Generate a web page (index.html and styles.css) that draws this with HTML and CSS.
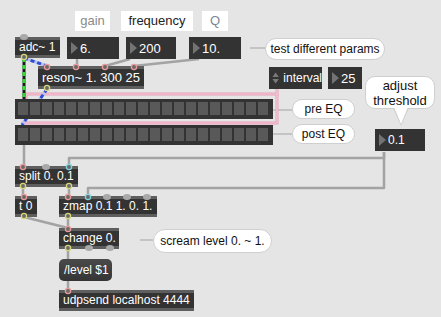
FILE: index.html
```html
<!DOCTYPE html>
<html lang="en">
<head>
    <meta charset="UTF-8">
    <title>scream level</title>
    <link rel="stylesheet" href="styles.css">
</head>
<body>
    <div class="patcher">
        <!-- patch cords, drawn under the boxes -->
        <svg class="layer" width="441" height="317">
            <g class="cord">
                <path d="M77,59 V66"/>
                <path d="M130,59 L105,66"/>
                <path d="M199,59 L134,66"/>
                <path d="M24,145 V166"/>
                <path d="M384,152 V158 H69 V166"/>
                <path d="M384,152 V188 H88 V196"/>
                <path d="M23,187 V196"/>
                <path d="M69,187 V196"/>
                <path d="M24,217 L68,228"/>
                <path d="M68,217 V228"/>
                <path d="M68,249 V259"/>
                <path d="M68,281 V290"/>
            </g>
            <g class="tail">
                <path d="M250,48 H266"/>
                <path d="M273,110 H293"/>
                <path d="M273,134 H293"/>
                <path d="M140,240 H154"/>
            </g>
            <g class="pink">
                <path d="M277,89 V94 H26 V99"/>
                <path d="M277,94 V123 H23 V125"/>
            </g>
            <g class="pink-in">
                <path d="M277,89 V94 H26 V99"/>
                <path d="M277,94 V123 H23 V125"/>
            </g>
            <g class="sig">
                <path d="M24,58 L47,66"/>
                <path d="M47,89 L22,125"/>
            </g>
            <g class="sig-dash">
                <path d="M24,58 L47,66"/>
                <path d="M47,89 L22,125"/>
            </g>
            <path class="green" d="M24,58 V99"/>
            <path class="green-dash" d="M24,58 V99"/>
        </svg>

        <div class="box label gain">gain</div>
        <div class="box label freq">frequency</div>
        <div class="box label q">Q</div>

        <div class="box obj adc">adc~ 1</div>
        <div class="box num n6">6.</div>
        <div class="box num n200">200</div>
        <div class="box num n10">10.</div>
        <div class="box bubble tip-test">test different params</div>

        <div class="box obj reson">reson~ 1. 300 25</div>
        <div class="box menu interval">
            <svg width="8" height="14" viewBox="0 0 8 14"><path d="M4,1 L7.5,6 H0.5 Z M4,13 L7.5,8 H0.5 Z" fill="#7a7a7a"/></svg>
            interval
        </div>
        <div class="box num n25">25</div>
        <div class="box bubble tip-adjust">adjust<br>threshold</div>

        <div class="box meter m1"><i></i></div>
        <div class="box meter m2"><i></i></div>
        <div class="box bubble tip-pre">pre EQ</div>
        <div class="box bubble tip-post">post EQ</div>
        <div class="box num n01">0.1</div>

        <div class="box obj split">split 0. 0.1</div>
        <div class="box obj t0">t 0</div>
        <div class="box obj zmap">zmap 0.1 1. 0. 1.</div>
        <div class="box obj change">change 0.</div>
        <div class="box bubble tip-scream">scream level 0. ~ 1.</div>
        <div class="box msg level">/level $1</div>
        <div class="box obj udp">udpsend localhost 4444</div>

        <!-- inlets and outlets, drawn over the boxes -->
        <svg class="layer" width="441" height="317">
            <g class="bump">
                <ellipse cx="24" cy="37" rx="4" ry="3"/>
                <ellipse cx="46" cy="167" rx="4" ry="3"/>
                <ellipse cx="107" cy="197" rx="4" ry="3"/>
                <ellipse cx="127" cy="197" rx="4" ry="3"/>
                <ellipse cx="147" cy="197" rx="4" ry="3"/>
                <ellipse cx="89" cy="248" rx="4" ry="3"/>
                <ellipse cx="110" cy="248" rx="4" ry="3"/>
            </g>
            <g class="port inlet">
                <circle cx="47" cy="67" r="2.6"/>
                <circle cx="76" cy="67" r="2.6"/>
                <circle cx="105" cy="67" r="2.6"/>
                <circle cx="134" cy="67" r="2.6"/>
                <circle cx="23" cy="167" r="2.6"/>
                <circle cx="24" cy="197" r="2.6"/>
                <circle cx="68" cy="197" r="2.6"/>
                <circle cx="68" cy="229" r="2.6"/>
                <circle cx="68" cy="291" r="2.6"/>
            </g>
            <g class="port cold">
                <circle cx="69" cy="167" r="2.6"/>
                <circle cx="88" cy="197" r="2.6"/>
            </g>
            <g class="port outlet">
                <circle cx="24" cy="57" r="2.6"/>
                <circle cx="47" cy="88" r="2.6"/>
                <circle cx="23" cy="186" r="2.6"/>
                <circle cx="69" cy="186" r="2.6"/>
                <circle cx="24" cy="216" r="2.6"/>
                <circle cx="68" cy="216" r="2.6"/>
                <circle cx="68" cy="248" r="2.6"/>
            </g>
        </svg>
    </div>
</body>
</html>
```

FILE: styles.css
```css
body {
    margin: 0;
    background-color: #e5e5e5;
    font-family: "Liberation Sans", Arial, sans-serif;
}
.patcher {
    position: relative;
    width: 441px;
    height: 317px;
    overflow: hidden;
}
.layer {
    position: absolute;
    left: 0;
    top: 0;
}
.box {
    position: absolute;
    box-sizing: border-box;
    white-space: nowrap;
}

/* cords */
.cord path {
    fill: none;
    stroke: #a3a3a3;
    stroke-width: 2.5;
    stroke-linejoin: round;
}
.tail path {
    fill: none;
    stroke: #c4c4c4;
    stroke-width: 2;
}
.pink path {
    fill: none;
    stroke: #e6a3ba;
    stroke-width: 3;
}
.pink-in path {
    fill: none;
    stroke: #f7cad9;
    stroke-width: 1.2;
}
.sig path {
    fill: none;
    stroke: #b4c0f0;
    stroke-width: 3;
}
.sig-dash path {
    fill: none;
    stroke: #2f4bd6;
    stroke-width: 3;
    stroke-dasharray: 4 3;
}
.green {
    fill: none;
    stroke: #1a1a1a;
    stroke-width: 3;
}
.green-dash {
    fill: none;
    stroke: #35d835;
    stroke-width: 3;
    stroke-dasharray: 4 3;
}

/* ports */
.bump {
    fill: #a9a9a9;
}
.port circle {
    fill: #6a6a6a;
    stroke-width: 1.3;
}
.inlet circle {
    stroke: #e99a9a;
}
.cold circle {
    stroke: #7fd3dc;
}
.outlet circle {
    stroke: #d6d67a;
}

/* comments */
.label {
    background-color: #fff;
    color: #8a8a8a;
    font-size: 13px;
    height: 20px;
    line-height: 20px;
    text-align: center;
    top: 11px;
}
.gain { left: 75px; width: 35px; }
.freq { left: 121px; width: 72px; color: #222; }
.q { left: 202px; width: 26px; color: #7b8794; }

.bubble {
    background-color: #fff;
    border: 1px solid #cfcfcf;
    border-radius: 12px;
    color: #111;
    font-size: 12px;
    text-align: center;
    display: flex;
    align-items: center;
    justify-content: center;
}
.tip-test { left: 265px; top: 38px; width: 120px; height: 22px; }
.tip-pre { left: 292px; top: 99px; width: 63px; height: 20px; }
.tip-post { left: 292px; top: 124px; width: 63px; height: 20px; }
.tip-scream { left: 153px; top: 229px; width: 119px; height: 24px; }
.tip-adjust {
    left: 365px;
    top: 76px;
    width: 70px;
    height: 33px;
    font-size: 13px;
    line-height: 15px;
    border-radius: 10px;
}
.tip-adjust::before,
.tip-adjust::after {
    content: "";
    position: absolute;
    left: 27px;
    top: 31px;
    border-left: 8px solid transparent;
    border-right: 8px solid transparent;
    border-top: 18px solid #cfcfcf;
}
.tip-adjust::after {
    left: 28px;
    top: 30px;
    border-left-width: 7px;
    border-right-width: 7px;
    border-top: 17px solid #fff;
}

/* max objects */
.obj {
    background-color: #333;
    color: #fff;
    font-size: 12px;
    height: 21px;
    line-height: 15px;
    padding: 0 4px;
    border-top: 3px solid #5e5e5e;
    border-bottom: 3px solid #5e5e5e;
}
.adc { left: 15px; top: 37px; width: 45px; }
.reson {
    left: 38px;
    top: 66px;
    width: 106px;
    height: 23px;
    font-size: 13px;
    line-height: 17px;
}
.split { left: 15px; top: 166px; width: 63px; }
.t0 { left: 15px; top: 196px; width: 22px; }
.zmap { left: 59px; top: 196px; width: 98px; }
.change { left: 59px; top: 228px; width: 60px; }
.udp { left: 59px; top: 290px; width: 135px; }

.msg {
    background: linear-gradient(#4a4a4a, #353535);
    border-radius: 5px;
    color: #fff;
    font-size: 12px;
    height: 22px;
    line-height: 22px;
    padding: 0 5px;
}
.level { left: 59px; top: 259px; width: 53px; }

.num {
    background-color: #333;
    color: #fff;
    font-size: 13px;
    height: 22px;
    display: flex;
    align-items: center;
    padding-left: 4px;
    top: 37px;
}
.num::before {
    content: "";
    border-left: 7px solid #737373;
    border-top: 6px solid transparent;
    border-bottom: 6px solid transparent;
    margin-right: 2px;
}
.n6 { left: 67px; width: 52px; }
.n200 { left: 126px; width: 50px; }
.n10 { left: 189px; width: 52px; }
.n25 { left: 328px; top: 67px; width: 34px; }
.n01 { left: 375px; top: 129px; width: 50px; font-size: 12px; }

.menu {
    background-color: #333;
    color: #fff;
    font-size: 12px;
    height: 22px;
    display: flex;
    align-items: center;
    gap: 4px;
    padding-left: 3px;
    left: 269px;
    top: 67px;
    width: 53px;
}

/* meters */
.meter {
    background-color: #333;
    left: 15px;
    width: 258px;
    height: 20px;
    padding: 3px 0 0 3px;
}
.meter i {
    display: block;
    width: 250px;
    height: 13px;
    background: repeating-linear-gradient(90deg, #595959 0 10px, #333 10px 12px);
}
.m1 { top: 99px; }
.m2 { top: 125px; }
```
